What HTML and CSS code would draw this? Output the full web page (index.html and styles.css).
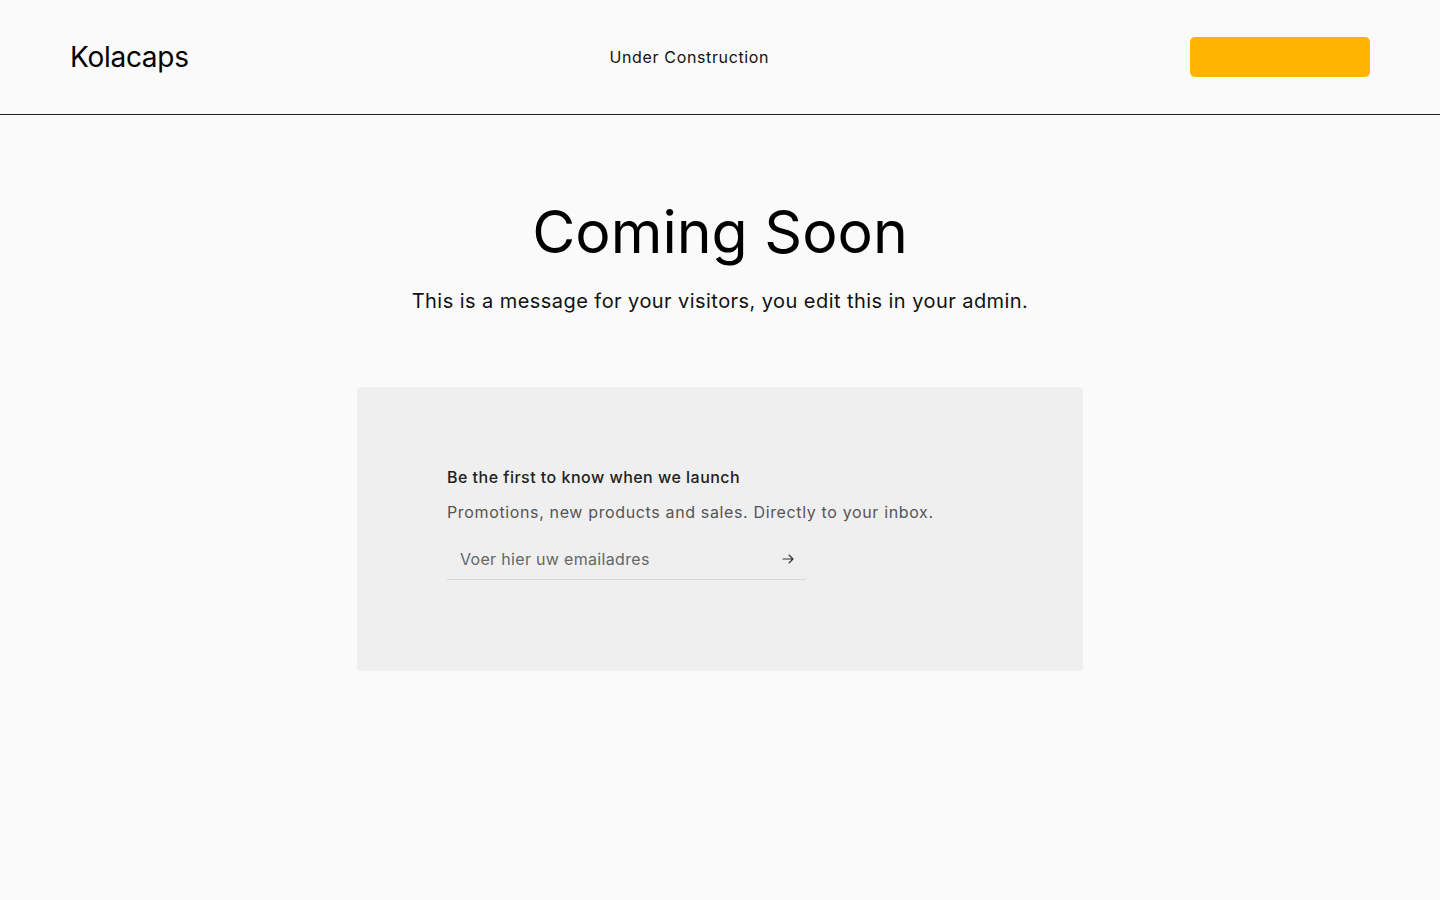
FILE: index.html
```html
<!DOCTYPE html>
<html lang="en">
<head>
<meta charset="utf-8">
<title>Kolacaps - Coming Soon</title>
<link rel="stylesheet" href="styles.css">
</head>
<body>
<header class="site-header">
  <div class="logo">Kolacaps</div>
  <div class="status">Under Construction</div>
  <a class="cta" href="#"></a>
</header>
<main class="main">
  <h1 class="title">Coming Soon</h1>
  <p class="message">This is a message for your visitors, you edit this in your admin.</p>
  <section class="card">
    <h2 class="card-title">Be the first to know when we launch</h2>
    <p class="card-text">Promotions, new products and sales. Directly to your inbox.</p>
    <form class="signup">
      <input class="signup-input" type="email" placeholder="Voer hier uw emailadres">
      <button class="signup-btn" type="button" aria-label="Submit">
        <svg width="14" height="14" viewBox="0 0 14 14" fill="none" stroke="#333" stroke-width="1.1" stroke-linecap="round" stroke-linejoin="round"><path d="M2 7h10M8 3l4 4-4 4"/></svg>
      </button>
    </form>
  </section>
</main>
</body>
</html>
```
FILE: styles.css
```css
* { box-sizing: border-box; }
html, body { margin: 0; padding: 0; }
body {
  background: #fafafa;
  font-family: Inter, "Noto Sans", "Liberation Sans", sans-serif;
  color: #111;
}
.site-header {
  display: flex;
  align-items: center;
  justify-content: space-between;
  padding: 37px 70px 37px;
  border-bottom: 1px solid #222;
  height: 115px;
}
.logo {
  font-size: 28px;
  font-weight: 400;
  color: #000;
  letter-spacing: -0.01em;
}
.status {
  font-size: 16px;
  letter-spacing: 0.04em;
  color: #111;
}
.cta {
  display: block;
  width: 180px;
  height: 40px;
  background: #ffb400;
  border-radius: 5px;
}
.main {
  display: flex;
  flex-direction: column;
  align-items: center;
  padding-top: 82px;
}
.title {
  margin: 0;
  font-size: 59px;
  font-weight: 400;
  line-height: 1.2;
  color: #000;
  letter-spacing: 0;
}
.message {
  margin: 19px 0 0;
  font-size: 20px;
  letter-spacing: 0.022em;
  line-height: 1.4;
  color: #111;
}
.card {
  margin-top: 72px;
  width: 726px;
  background: #efefef;
  border-radius: 4px;
  padding: 80px 90px 91px;
}
.card-title {
  margin: 0;
  font-size: 16px;
  font-weight: 500;
  letter-spacing: 0.03em;
  line-height: 20px;
  color: #222;
}
.card-text {
  margin: 15px 0 0;
  font-size: 16px;
  letter-spacing: 0.04em;
  line-height: 20px;
  color: #555;
}
.signup {
  margin-top: 18px;
  width: 359px;
  display: flex;
  align-items: center;
  border-bottom: 1px solid #d6d6d6;
  height: 40px;
}
.signup-input {
  flex: 1;
  border: 0;
  background: transparent;
  font-family: inherit;
  font-size: 16px;
  letter-spacing: 0.02em;
  padding: 0 13px;
  height: 100%;
  outline: none;
  color: #333;
}
.signup-input::placeholder { color: #666; }
.signup-btn {
  border: 0;
  background: transparent;
  padding: 0 11px 0 0;
  display: flex;
  align-items: center;
  cursor: pointer;
}
```
